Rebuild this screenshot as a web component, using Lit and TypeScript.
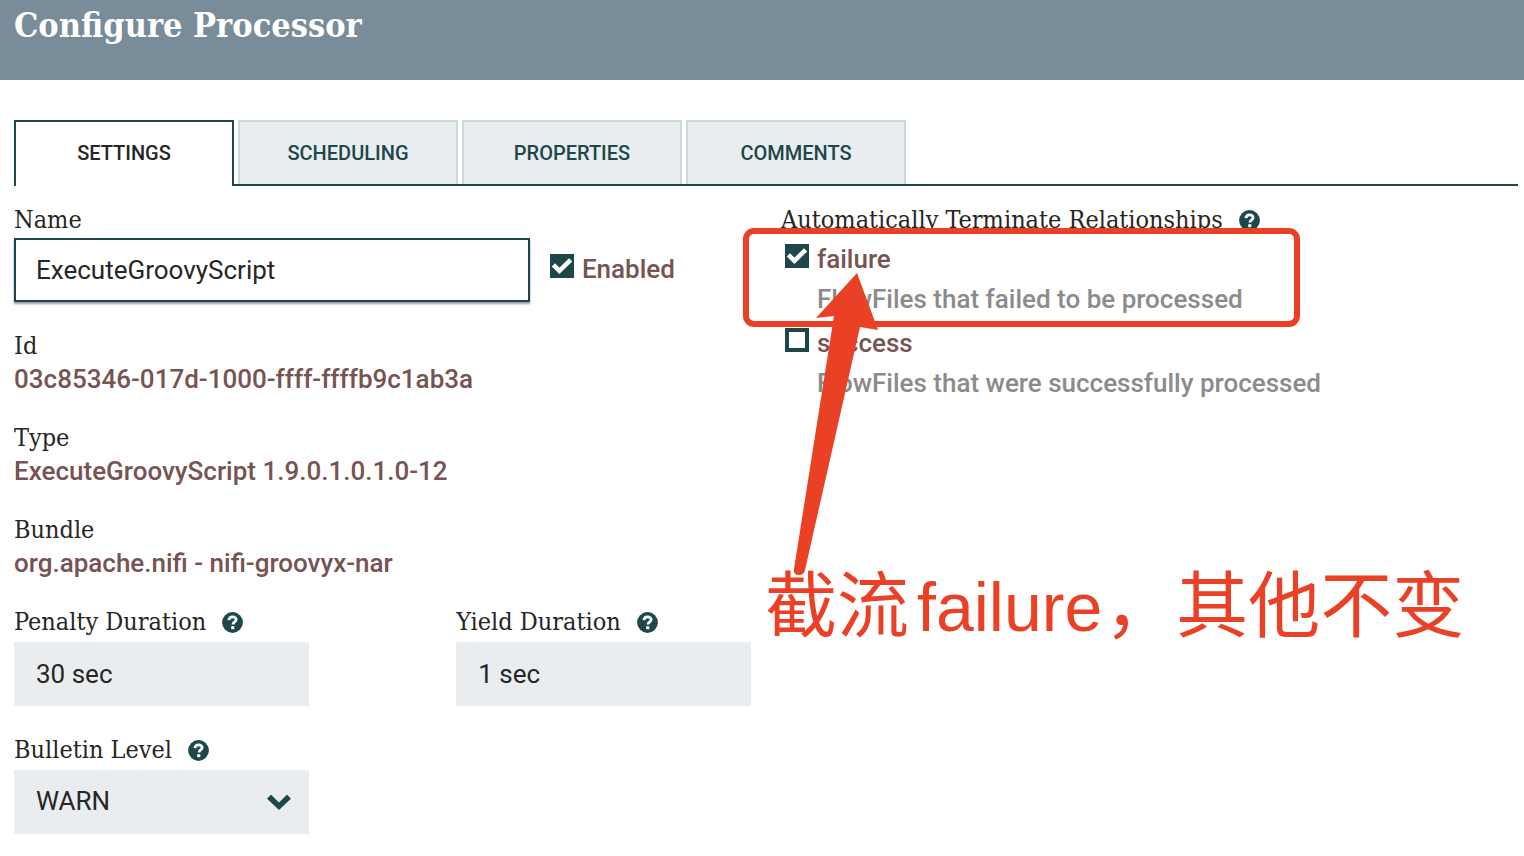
import { LitElement, html, css } from "lit";
import { customElement, property, state } from "lit/decorators.js";

const TABS = ["Settings", "Scheduling", "Properties", "Comments"];

const RELATIONSHIPS = [
  { name: "failure", description: "FlowFiles that failed to be processed", checked: true },
  { name: "success", description: "FlowFiles that were successfully processed", checked: false },
];

@customElement("help-icon")
class HelpIcon extends LitElement {
  static styles = css`
    :host { display: inline-flex; width: 21px; height: 21px; }
    .icon { width: 100%; height: 100%; display: block; }
  `;
  render() {
    return html`<svg class="icon" viewBox="0 0 21 21" aria-hidden="true">
      <circle cx="10.5" cy="10.5" r="10.4" fill="#1d474a"></circle>
      <path d="M6.9 8.2C7.2 3.8 14.3 3.9 14.1 7.7C14 10 11 10 11 12.6" fill="none" stroke="#fff" stroke-width="2.8"></path>
      <rect x="9.2" y="14.2" width="3.1" height="3" fill="#fff"></rect>
    </svg>`;
  }
}

@customElement("check-field")
class CheckField extends LitElement {
  @property() label = "";
  @property({ type: Boolean }) checked = false;

  static styles = css`
    :host { display: block; }
    .row { display: flex; align-items: flex-start; gap: 8px; color: #775351; font: 500 26px/30px Roboto, sans-serif; }
    .box { display: grid; flex: none; width: 24px; height: 24px; }
    .input, .mark { grid-area: 1 / 1; width: 24px; height: 24px; margin: 0; }
    .input { appearance: none; border: 4px solid #1d474a; background: #fff; }
    .input:checked { background: #1d474a; }
    .mark { display: none; pointer-events: none; }
    .input:checked + .mark { display: block; }
  `;
  render() {
    return html`<label class="row">
      <span class="box">
        <input class="input" type="checkbox" .checked=${this.checked}
          @change=${(e: Event) => { this.checked = (e.target as HTMLInputElement).checked; }} />
        <svg class="mark" viewBox="0 0 24 24" aria-hidden="true">
          <path d="M3.4 10.8L9.4 16.8L20.6 5.8" fill="none" stroke="#fff" stroke-width="4.6"></path>
        </svg>
      </span>
      <span>${this.label}</span>
    </label>`;
  }
}

@customElement("app-root")
class AppRoot extends LitElement {
  @state() private active = "Settings";

  static styles = css`
    :host { display: block; background: #fff; color: #262626; font-family: Roboto, sans-serif; }
    * { box-sizing: border-box; }
    .header { height: 80px; padding: 4px 14px; background: #788d99; }
    .title { margin: 0; color: #fff; font: 700 34px/42px "Roboto Slab", "DejaVu Serif Condensed", "DejaVu Serif", serif; }
    .main { padding: 40px 6px 22px 14px; }
    .tabs { display: flex; gap: 4px; border-bottom: 2px solid #1d474a; }
    .tab {
      width: 220px; height: 64px; padding: 0; border: 2px solid #cddad9; border-bottom: 0;
      background: #e9edf0; color: #1d474a; font: 500 20px/24px Roboto, sans-serif; text-transform: uppercase; cursor: pointer;
    }
    .tab.active { height: 66px; margin-bottom: -2px; padding-bottom: 2px; border-color: #1d474a; background: #fff; color: #262626; }
    .columns { display: grid; grid-template-columns: 1fr 1fr; column-gap: 30px; padding-top: 18px; }
    .settings { display: flex; flex-direction: column; gap: 26px; }
    .label { display: flex; align-items: center; gap: 16px; font: 400 25px/32px "Roboto Slab", "DejaVu Serif Condensed", "DejaVu Serif", serif; white-space: nowrap; }
    .value { margin: 0; color: #775351; font: 500 26px/34px Roboto, sans-serif; }
    .name { display: grid; row-gap: 2px; margin-bottom: 2px; }
    .name-row { display: flex; align-items: center; gap: 20px; }
    .name-row check-field { padding-bottom: 2px; }
    .text, .select {
      display: block; width: 100%; height: 64px; margin: 0; padding: 0 20px; border: 2px solid #e9edf0; border-radius: 0;
      background: #e9edf0; color: #262626; font: 400 26px/30px Roboto, sans-serif; outline: 0;
    }
    .name-row .text { width: 70%; border-color: #1d474a; background: #fff; box-shadow: 0 2px 2px #0006; }
    .durations { display: flex; justify-content: space-between; margin-bottom: 2px; }
    .small { display: grid; row-gap: 4px; width: 40%; }
    .select { appearance: none; padding-bottom: 2px; }
    .picker { display: grid; align-items: center; }
    .picker > * { grid-area: 1 / 1; }
    .chevron { justify-self: end; width: 24px; height: 16px; margin-right: 18px; pointer-events: none; }
    .relations { position: relative; }
    .list { display: grid; row-gap: 14px; margin: 8px 0 0; padding: 0 0 0 4px; list-style: none; }
    .description { margin: 10px 0 0 32px; color: #8b8b8b; font: 500 26px/30px Roboto, sans-serif; }
    .frame { position: absolute; left: -38px; top: 24px; width: 557px; height: 99px; border: 6px solid #ea4025; border-radius: 11px; pointer-events: none; }
    .arrow { position: absolute; left: 9px; top: 66px; width: 90px; height: 308px; pointer-events: none; }
    .note { position: absolute; left: -16px; top: 346px; margin: 0; color: #ea4025; font: 400 72px/100px "Noto Sans CJK SC", sans-serif; white-space: nowrap; }
    .latin { padding: 0 2px 0 8px; font-family: "Liberation Sans", Arial, sans-serif; font-size: 68px; }
  `;

  private heading(text: string, forId: string, help = false) {
    return html`<label class="label" for=${forId}>${text}${help ? html`<help-icon></help-icon>` : ""}</label>`;
  }

  private fact(term: string, value: string) {
    return html`<div><div class="label">${term}</div><p class="value">${value}</p></div>`;
  }

  render() {
    return html`
      <header class="header"><h1 class="title">Configure Processor</h1></header>
      <main class="main">
        <div class="tabs" role="tablist">
          ${TABS.map((t) => html`<button role="tab" class="tab ${t === this.active ? "active" : ""}"
            aria-selected=${t === this.active} @click=${() => { this.active = t; }}>${t}</button>`)}
        </div>
        <div class="columns">
          <section class="settings">
            <div class="name">
              ${this.heading("Name", "name")}
              <div class="name-row">
                <input class="text" id="name" type="text" value="ExecuteGroovyScript" />
                <check-field label="Enabled" checked></check-field>
              </div>
            </div>
            ${this.fact("Id", "03c85346-017d-1000-ffff-ffffb9c1ab3a")}
            ${this.fact("Type", "ExecuteGroovyScript 1.9.0.1.0.1.0-12")}
            ${this.fact("Bundle", "org.apache.nifi - nifi-groovyx-nar")}
            <div class="durations">
              <div class="small">
                ${this.heading("Penalty Duration", "penalty", true)}
                <input class="text" id="penalty" type="text" value="30 sec" />
              </div>
              <div class="small">
                ${this.heading("Yield Duration", "yield", true)}
                <input class="text" id="yield" type="text" value="1 sec" />
              </div>
            </div>
            <div class="small">
              ${this.heading("Bulletin Level", "bulletin", true)}
              <div class="picker">
                <select class="select" id="bulletin"><option>WARN</option></select>
                <svg class="chevron" viewBox="0 0 24 16" aria-hidden="true">
                  <path d="M0.4 4.2L3.6 1Q4 .6 4.4 1L12 8.4L19.6 1Q20 .6 20.4 1L23.6 4.2Q24 4.6 23.6 5L12.5 15.6Q12 16 11.5 15.6L.4 5Q0 4.6 .4 4.2Z" fill="#1d474a"></path>
                </svg>
              </div>
            </div>
          </section>
          <section class="relations">
            <div class="label">Automatically Terminate Relationships<help-icon></help-icon></div>
            <ul class="list">
              ${RELATIONSHIPS.map((r) => html`<li>
                <check-field label=${r.name} ?checked=${r.checked}></check-field>
                <p class="description">${r.description}</p>
              </li>`)}
            </ul>
            <div class="frame"></div>
            <svg class="arrow" viewBox="790 270 90 308" aria-hidden="true">
              <path d="M857 273L816 318L834 316L794 569Q793 575 799 575Q804 575 805 570L860 327L878 330Z" fill="#ea4025"></path>
            </svg>
            <p class="note">截流<span class="latin">failure</span>，其他不变</p>
          </section>
        </div>
      </main>
    `;
  }
}
